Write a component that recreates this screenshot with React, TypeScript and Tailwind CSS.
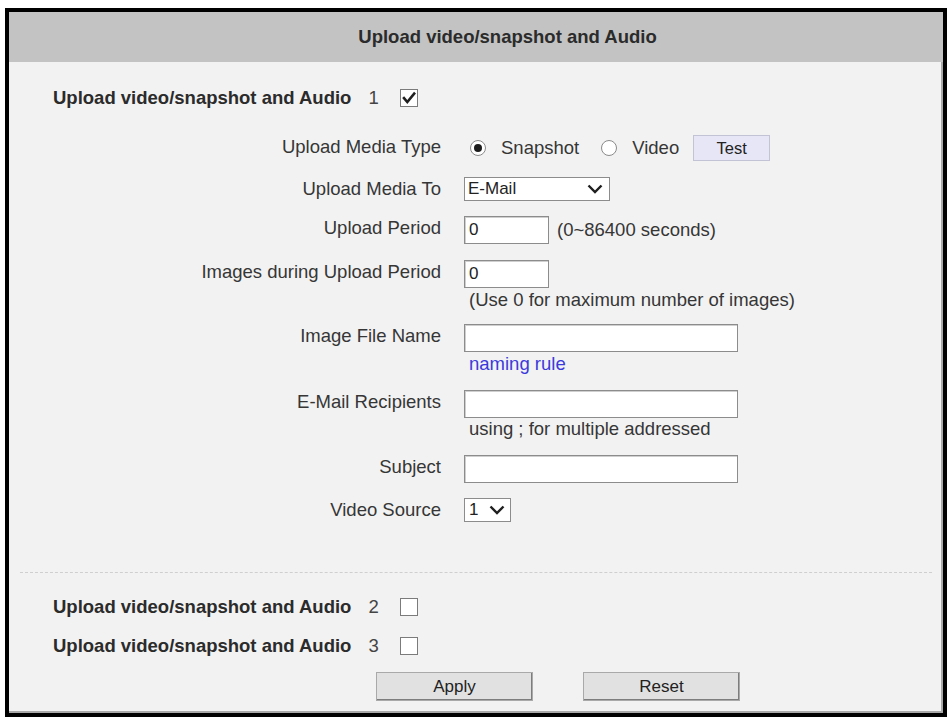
import React from 'react';

type RowProps = {
  label: string;
  className?: string;
  children: React.ReactNode;
};

function Row({ label, className = '', children }: RowProps) {
  return (
    <div className={`flex items-start ${className}`}>
      <div className="w-[432px] shrink-0 text-right leading-[24px] whitespace-nowrap">{label}</div>
      <div className="ml-[23px] flex flex-col">{children}</div>
    </div>
  );
}

function CheckBox({ checked = false }: { checked?: boolean }) {
  return (
    <span className="inline-flex h-[18px] w-[18px] items-center justify-center border border-[#7b7b7b] bg-white">
      {checked && (
        <svg width="14" height="14" viewBox="0 0 14 14">
          <path d="M2 7.2 L5.3 11 L12.2 2.6" fill="none" stroke="#1f1f1f" strokeWidth="2.6" strokeLinecap="square" />
        </svg>
      )}
    </span>
  );
}

function Radio({ on = false }: { on?: boolean }) {
  return (
    <span className="inline-flex h-[16px] w-[16px] items-center justify-center rounded-full border border-[#8a8a8a] bg-white">
      {on && <span className="h-[8px] w-[8px] rounded-full bg-[#1c1c1c]" />}
    </span>
  );
}

function Chevron() {
  return (
    <svg width="16" height="10" viewBox="0 0 16 10">
      <path d="M1.5 1.5 L8 8 L14.5 1.5" fill="none" stroke="#1f1f1f" strokeWidth="2.4" />
    </svg>
  );
}

function SectionTitle({ n, checked = false, className = '' }: { n: number; checked?: boolean; className?: string }) {
  return (
    <div className={`flex h-[24px] items-center pl-[44px] ${className}`}>
      <span className="font-bold text-[#2b2b2b]">Upload video/snapshot and Audio</span>
      <span className="ml-[17px] text-[#444]">{n}</span>
      <span className="ml-[21px] flex">
        <CheckBox checked={checked} />
      </span>
    </div>
  );
}

const inputCls =
  'h-[28px] border border-[#8c8c8c] bg-white px-[4px] text-[17px] text-[#222] shadow-[inset_1px_1px_0_#cfcfcf] outline-none';

export default function App() {
  return (
    <div className="h-screen w-full overflow-hidden bg-white pl-[5px] pt-[8px] font-['Liberation_Sans',Arial,sans-serif]">
      <div className="flex h-[709px] w-[942px] flex-col border-4 border-black bg-[#f2f2f2] text-[18.5px] text-[#363636] shadow-[inset_-2px_-2px_0_#a8a8a8]">
        {/* header */}
        <div className="flex h-[50px] items-center justify-center bg-[#c3c3c3] pl-[63px] font-bold text-[#2b2b2b]">
          Upload video/snapshot and Audio
        </div>

        <SectionTitle n={1} checked className="mt-[24px]" />

        <Row label="Upload Media Type" className="mt-[25px]">
          <div className="flex h-[26px] items-center">
            <span className="ml-[6px] flex">
              <Radio on />
            </span>
            <span className="ml-[15px]">Snapshot</span>
            <span className="ml-[22px] flex">
              <Radio />
            </span>
            <span className="ml-[15px]">Video</span>
            <button className="ml-[14px] h-[26px] w-[77px] border border-[#c3c3d6] bg-[#e6e6f6] text-[16.5px] text-[#222]">
              Test
            </button>
          </div>
        </Row>

        <Row label="Upload Media To" className="mt-[16px]">
          <div className="flex h-[24px] w-[146px] items-center justify-between border border-[#8c8c8c] bg-white pl-[3px] pr-[6px] text-[17px] text-[#222]">
            <span>E-Mail</span>
            <Chevron />
          </div>
        </Row>

        <Row label="Upload Period" className="mt-[15px]">
          <div className="flex items-center">
            <input readOnly defaultValue="0" className={`${inputCls} w-[85px]`} />
            <span className="ml-[8px]">(0~86400 seconds)</span>
          </div>
        </Row>

        <Row label="Images during Upload Period" className="mt-[16px]">
          <input readOnly defaultValue="0" className={`${inputCls} w-[85px]`} />
          <span className="mt-[2px] pl-[5px] leading-[20px]">(Use 0 for maximum number of images)</span>
        </Row>

        <Row label="Image File Name" className="mt-[14px]">
          <input readOnly defaultValue="" className={`${inputCls} w-[274px]`} />
          <span className="mt-[2px] pl-[5px] leading-[20px] text-[#3a3adc]">naming rule</span>
        </Row>

        <Row label="E-Mail Recipients" className="mt-[16px]">
          <input readOnly defaultValue="" className={`${inputCls} w-[274px]`} />
          <span className="mt-[1px] pl-[5px] leading-[20px]">using ; for multiple addressed</span>
        </Row>

        <Row label="Subject" className="mt-[16px]">
          <input readOnly defaultValue="" className={`${inputCls} w-[274px]`} />
        </Row>

        <Row label="Video Source" className="mt-[15px]">
          <div className="flex h-[24px] w-[47px] items-center justify-between border border-[#8c8c8c] bg-white pl-[4px] pr-[5px] text-[17px] text-[#222]">
            <span>1</span>
            <Chevron />
          </div>
        </Row>

        <div className="mx-[11px] mt-[50px] border-t border-dashed border-[#cfcfcf]" />

        <SectionTitle n={2} className="mt-[22px]" />
        <SectionTitle n={3} className="mt-[15px]" />

        <div className="mt-[14px] flex pl-[367px]">
          <button className="h-[29px] w-[157px] border border-[#a9a9a9] bg-[#e1e1e1] text-[17px] text-[#222] shadow-[inset_-1px_-1px_0_#7d7d7d]">
            Apply
          </button>
          <button className="ml-[50px] h-[29px] w-[157px] border border-[#a9a9a9] bg-[#e1e1e1] text-[17px] text-[#222] shadow-[inset_-1px_-1px_0_#7d7d7d]">
            Reset
          </button>
        </div>
      </div>
    </div>
  );
}
